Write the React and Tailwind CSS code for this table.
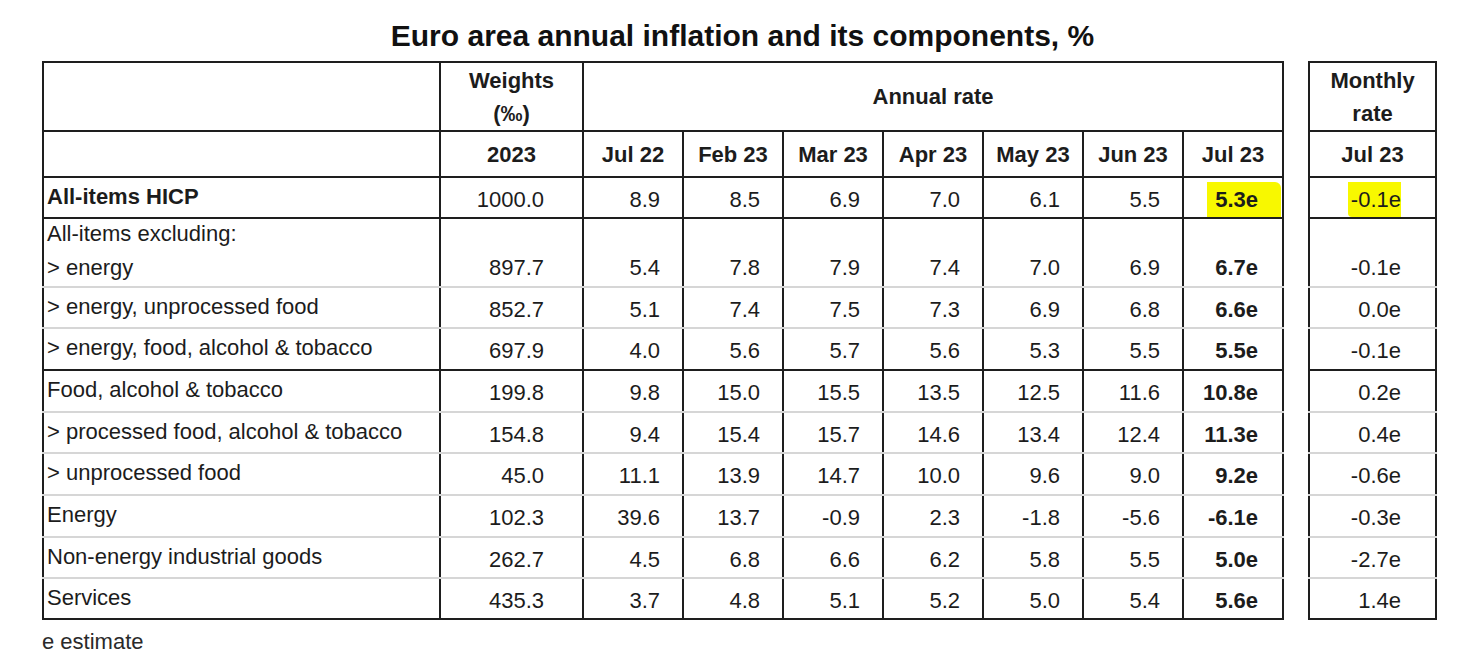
import React from 'react';

const months = ['Jul 22', 'Feb 23', 'Mar 23', 'Apr 23', 'May 23', 'Jun 23', 'Jul 23'];

const rows = [
    { label: ['All-items HICP'], bold: true, w: '1000.0', vals: ['8.9', '8.5', '6.9', '7.0', '6.1', '5.5', '5.3e'], m: '-0.1e', hl: true, h: 'h-[41px]', line: 'dark' },
    { label: ['All-items excluding:', '> energy'], w: '897.7', vals: ['5.4', '7.8', '7.9', '7.4', '7.0', '6.9', '6.7e'], m: '-0.1e', h: 'h-[69px]', line: 'light' },
    { label: ['> energy, unprocessed food'], w: '852.7', vals: ['5.1', '7.4', '7.5', '7.3', '6.9', '6.8', '6.6e'], m: '0.0e', h: 'h-[41px]', line: 'light' },
    { label: ['> energy, food, alcohol & tobacco'], w: '697.9', vals: ['4.0', '5.6', '5.7', '5.6', '5.3', '5.5', '5.5e'], m: '-0.1e', h: 'h-[42px]', line: 'dark' },
    { label: ['Food, alcohol & tobacco'], w: '199.8', vals: ['9.8', '15.0', '15.5', '13.5', '12.5', '11.6', '10.8e'], m: '0.2e', h: 'h-[42px]', line: 'light' },
    { label: ['> processed food, alcohol & tobacco'], w: '154.8', vals: ['9.4', '15.4', '15.7', '14.6', '13.4', '12.4', '11.3e'], m: '0.4e', h: 'h-[41px]', line: 'light' },
    { label: ['> unprocessed food'], w: '45.0', vals: ['11.1', '13.9', '14.7', '10.0', '9.6', '9.0', '9.2e'], m: '-0.6e', h: 'h-[42px]', line: 'light' },
    { label: ['Energy'], w: '102.3', vals: ['39.6', '13.7', '-0.9', '2.3', '-1.8', '-5.6', '-6.1e'], m: '-0.3e', h: 'h-[42px]', line: 'light' },
    { label: ['Non-energy industrial goods'], w: '262.7', vals: ['4.5', '6.8', '6.6', '6.2', '5.8', '5.5', '5.0e'], m: '-2.7e', h: 'h-[41px]', line: 'light' },
    { label: ['Services'], w: '435.3', vals: ['3.7', '4.8', '5.1', '5.2', '5.0', '5.4', '5.6e'], m: '1.4e', h: 'h-[41px]', line: 'dark' },
];

const cell = 'border-x-2 border-b-2 border-t-0 border-x-[#1e1e1e]';
const bottom = (line) => (line === 'dark' ? 'border-b-[#1e1e1e]' : 'border-b-[#d6d6d6]');

const App = () => {
    return (
        <div className="w-[1468px] h-[672px] bg-white text-[#1c1c1c] font-['Liberation_Sans',Arial,sans-serif]">
            <div className="pl-[42px] w-[1437px]">
                <h1 className="pt-[18px] h-[61px] text-center text-[30px] leading-[36px] font-bold text-[#111] pl-[6px]">
                    Euro area annual inflation and its components, %
                </h1>
                <div className="flex gap-[24px] items-start">
                    <table className="border-collapse table-fixed w-[1241px] text-[22px] leading-[25px]">
                        <colgroup>
                            <col className="w-[397px]" />
                            <col className="w-[143px]" />
                            {months.map(m => (
                                <col key={m} className="w-[100px]" />
                            ))}
                        </colgroup>
                        <thead>
                            <tr className="h-[69px]">
                                <th className={`${cell} border-t-2 border-t-[#1e1e1e] border-b-[#1e1e1e]`}></th>
                                <th className={`${cell} border-t-2 border-t-[#1e1e1e] border-b-[#1e1e1e] font-bold leading-[33px]`}>
                                    Weights<br />(‰)
                                </th>
                                <th colSpan={7} className={`${cell} border-t-2 border-t-[#1e1e1e] border-b-[#1e1e1e] font-bold`}>
                                    Annual rate
                                </th>
                            </tr>
                            <tr className="h-[46px]">
                                <th className={`${cell} border-b-[#1e1e1e]`}></th>
                                <th className={`${cell} border-b-[#1e1e1e] font-bold`}>2023</th>
                                {months.map(m => (
                                    <th key={m} className={`${cell} border-b-[#1e1e1e] font-bold`}>{m}</th>
                                ))}
                            </tr>
                        </thead>
                        <tbody>
                            {rows.map((r, i) => (
                                <tr key={i} className={r.h}>
                                    <td className={`${cell} ${bottom(r.line)} pl-[3px] ${r.label.length > 1 ? 'align-top pt-[2px]' : 'align-middle pb-[3px]'} ${r.bold ? 'font-bold' : ''} whitespace-nowrap`}>
                                        {r.label.map((l, j) => (
                                            <div key={j} className={j > 0 ? 'mt-[9px]' : ''}>{l}</div>
                                        ))}
                                    </td>
                                    <td className={`${cell} ${bottom(r.line)} text-right pr-[38px] ${r.label.length > 1 ? 'align-bottom pb-[6px]' : 'align-middle pt-[3px]'}`}>
                                        {r.w}
                                    </td>
                                    {r.vals.map((v, j) => {
                                        const last = j === r.vals.length - 1;
                                        return (
                                            <td
                                                key={j}
                                                className={`${cell} ${bottom(r.line)} text-right ${last ? (r.hl ? 'pr-[1px] font-bold' : 'pr-[24px] font-bold') : 'pr-[22px]'} ${r.label.length > 1 ? 'align-bottom pb-[6px]' : 'align-middle pt-[3px]'}`}
                                            >
                                                {last && r.hl ? (
                                                    <span className="inline-block bg-[#f8f800] pl-[8px] pr-[23px] py-[5px] rounded-tr-[6px]">{v}</span>
                                                ) : (
                                                    v
                                                )}
                                            </td>
                                        );
                                    })}
                                </tr>
                            ))}
                        </tbody>
                    </table>

                    <table className="border-collapse table-fixed w-[130px] text-[22px] leading-[25px]">
                        <thead>
                            <tr className="h-[69px]">
                                <th className={`${cell} border-t-2 border-t-[#1e1e1e] border-b-[#1e1e1e] font-bold leading-[33px]`}>
                                    Monthly<br />rate
                                </th>
                            </tr>
                            <tr className="h-[46px]">
                                <th className={`${cell} border-b-[#1e1e1e] font-bold`}>Jul 23</th>
                            </tr>
                        </thead>
                        <tbody>
                            {rows.map((r, i) => (
                                <tr key={i} className={r.h}>
                                    <td className={`${cell} ${bottom(r.line)} text-right pr-[34px] ${r.label.length > 1 ? 'align-bottom pb-[6px]' : 'align-middle pt-[3px]'}`}>
                                        {r.hl ? (
                                            <span className="inline-block bg-[#f8f800] pl-[3px] py-[5px] rounded-bl-[4px]">{r.m}</span>
                                        ) : (
                                            r.m
                                        )}
                                    </td>
                                </tr>
                            ))}
                        </tbody>
                    </table>
                </div>
                <p className="mt-[10px] text-[22px] leading-[24px] text-[#2a2a2a]">e estimate</p>
            </div>
        </div>
    );
};

export default App;
